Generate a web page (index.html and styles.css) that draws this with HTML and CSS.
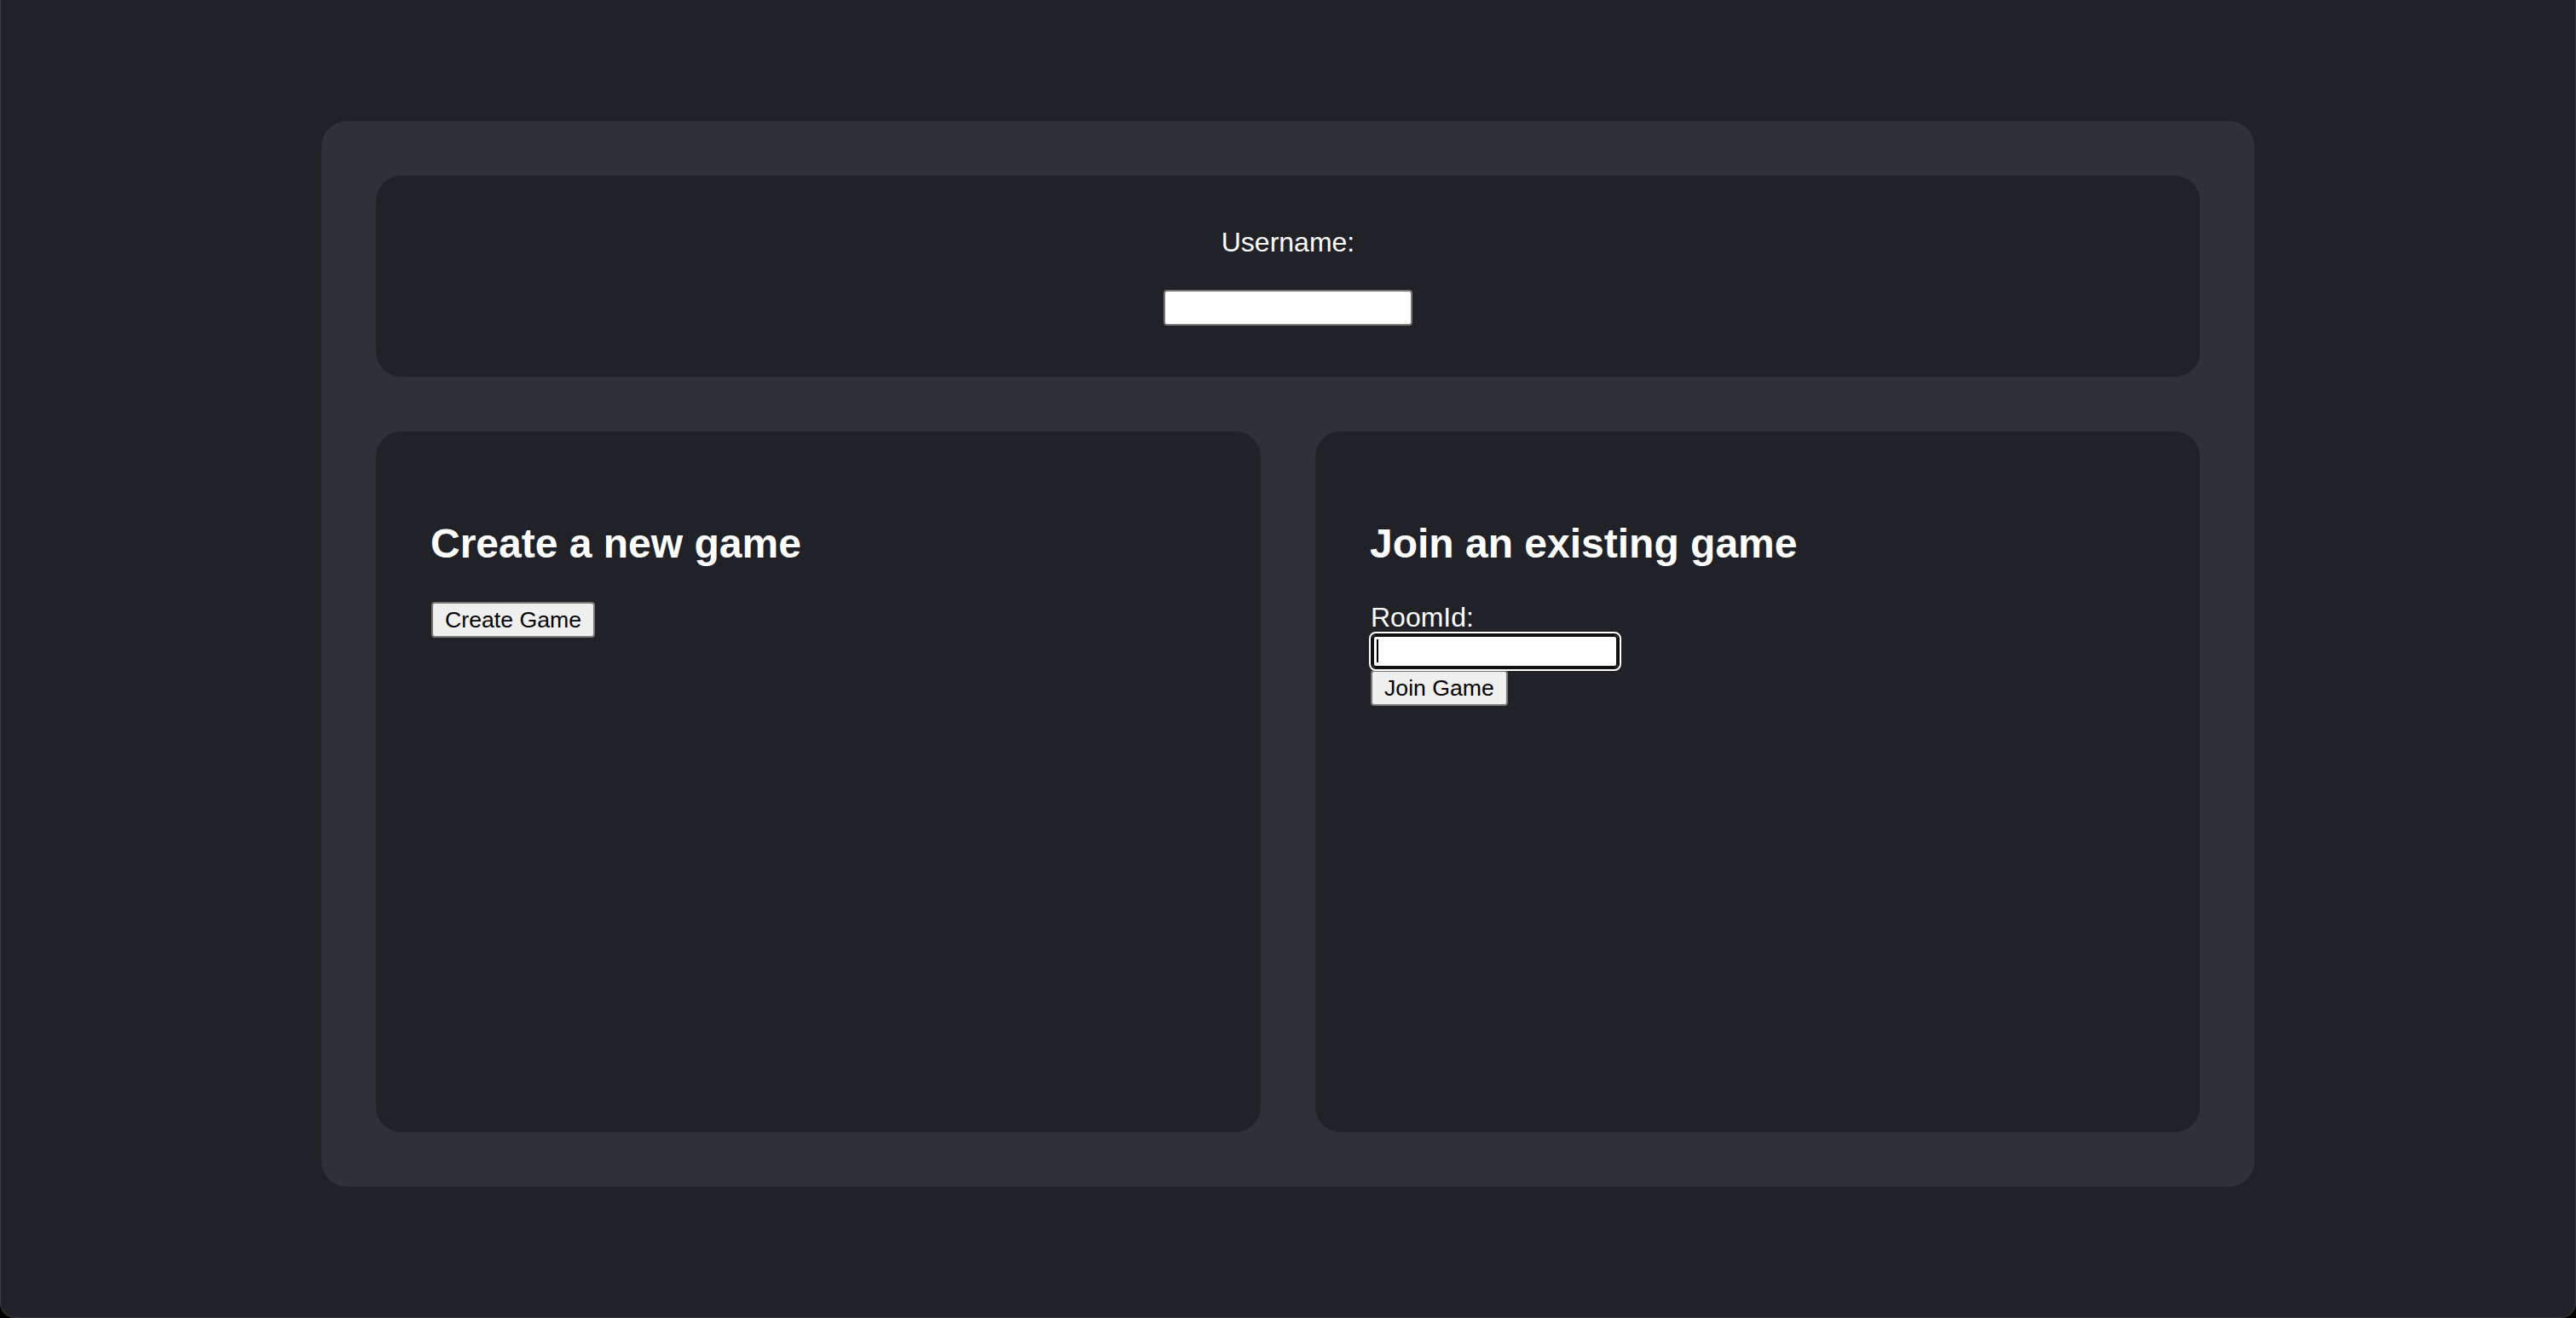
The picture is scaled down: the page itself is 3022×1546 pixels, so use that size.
FILE: index.html
```html
<!DOCTYPE html>
<html lang="en">
<head>
<meta charset="utf-8">
<title>Game Lobby</title>
<link rel="stylesheet" href="styles.css">
</head>
<body>
<div class="window">
  <main class="panel">
    <section class="card user-card">
      <label class="user-label" for="username">Username:</label>
      <input id="username" class="text-input" type="text">
    </section>
    <div class="games">
      <section class="card game-card">
        <h2 class="game-title">Create a new game</h2>
        <button class="btn" type="button">Create Game</button>
      </section>
      <section class="card game-card">
        <h2 class="game-title">Join an existing game</h2>
        <label class="room-label" for="roomid">RoomId:</label>
        <span class="field">
          <input id="roomid" class="text-input focused" type="text">
          <span class="caret"></span>
        </span>
        <button class="btn join-btn" type="button">Join Game</button>
      </section>
    </div>
  </main>
</div>
</body>
</html>
```

FILE: styles.css
```css
html {
  background: #000;
}

body {
  margin: 0;
  font-family: "Liberation Sans", Arial, Helvetica, sans-serif;
}

.window {
  height: 1546px;
  box-sizing: border-box;
  background: #212227;
  border: 1px solid #3b3c41;
  border-top: none;
  border-radius: 0 0 18px 18px;
  padding-top: 142px;
  overflow: hidden;
}

.panel {
  width: 2268px;
  margin: 0 auto;
  box-sizing: border-box;
  padding: 64px;
  background: #2e3139;
  border-radius: 30px;
  display: flex;
  flex-direction: column;
  gap: 64px;
}

.card {
  background: #212227;
  border-radius: 30px;
}

.user-card {
  height: 236px;
  box-sizing: border-box;
  padding: 60px 0;
  display: flex;
  flex-direction: column;
  align-items: center;
}

.user-label {
  font-size: 32px;
  line-height: 37px;
  color: #fff;
  margin-bottom: 37px;
}

.text-input {
  display: block;
  width: 292px;
  height: 42px;
  box-sizing: border-box;
  margin: 0;
  padding: 0 6px;
  border: 2px solid #767676;
  border-radius: 4px;
  background: #fff;
  font-family: inherit;
  font-size: 26px;
  color: #000;
}

.games {
  display: grid;
  grid-template-columns: 1fr 1fr;
  gap: 64px;
  height: 822px;
}

.game-card {
  box-sizing: border-box;
  padding: 64px 64px 64px 65px;
  display: flex;
  flex-direction: column;
  align-items: flex-start;
}

.game-title {
  font-size: 48px;
  line-height: 56px;
  font-weight: 700;
  color: #fff;
  margin: 40px 0 40px -1px;
}

.room-label {
  font-size: 32px;
  line-height: 37px;
  color: #fff;
}

.field {
  position: relative;
  display: block;
}

.text-input.focused {
  border: 2px solid #101010;
  box-shadow: inset 0 0 0 2px #101010;
  outline: 2px solid #fff;
  outline-offset: 0;
  border-radius: 6px;
}

.caret {
  position: absolute;
  left: 7px;
  top: 7px;
  width: 2px;
  height: 27px;
  background: #000;
}

.btn {
  height: 42px;
  margin: 0;
  padding: 0 14px;
  border: 2px solid #767676;
  border-radius: 4px;
  background: #efefef;
  font-family: inherit;
  font-size: 26.67px;
  color: #000;
}

.join-btn {
  margin-top: 1px;
}
```
